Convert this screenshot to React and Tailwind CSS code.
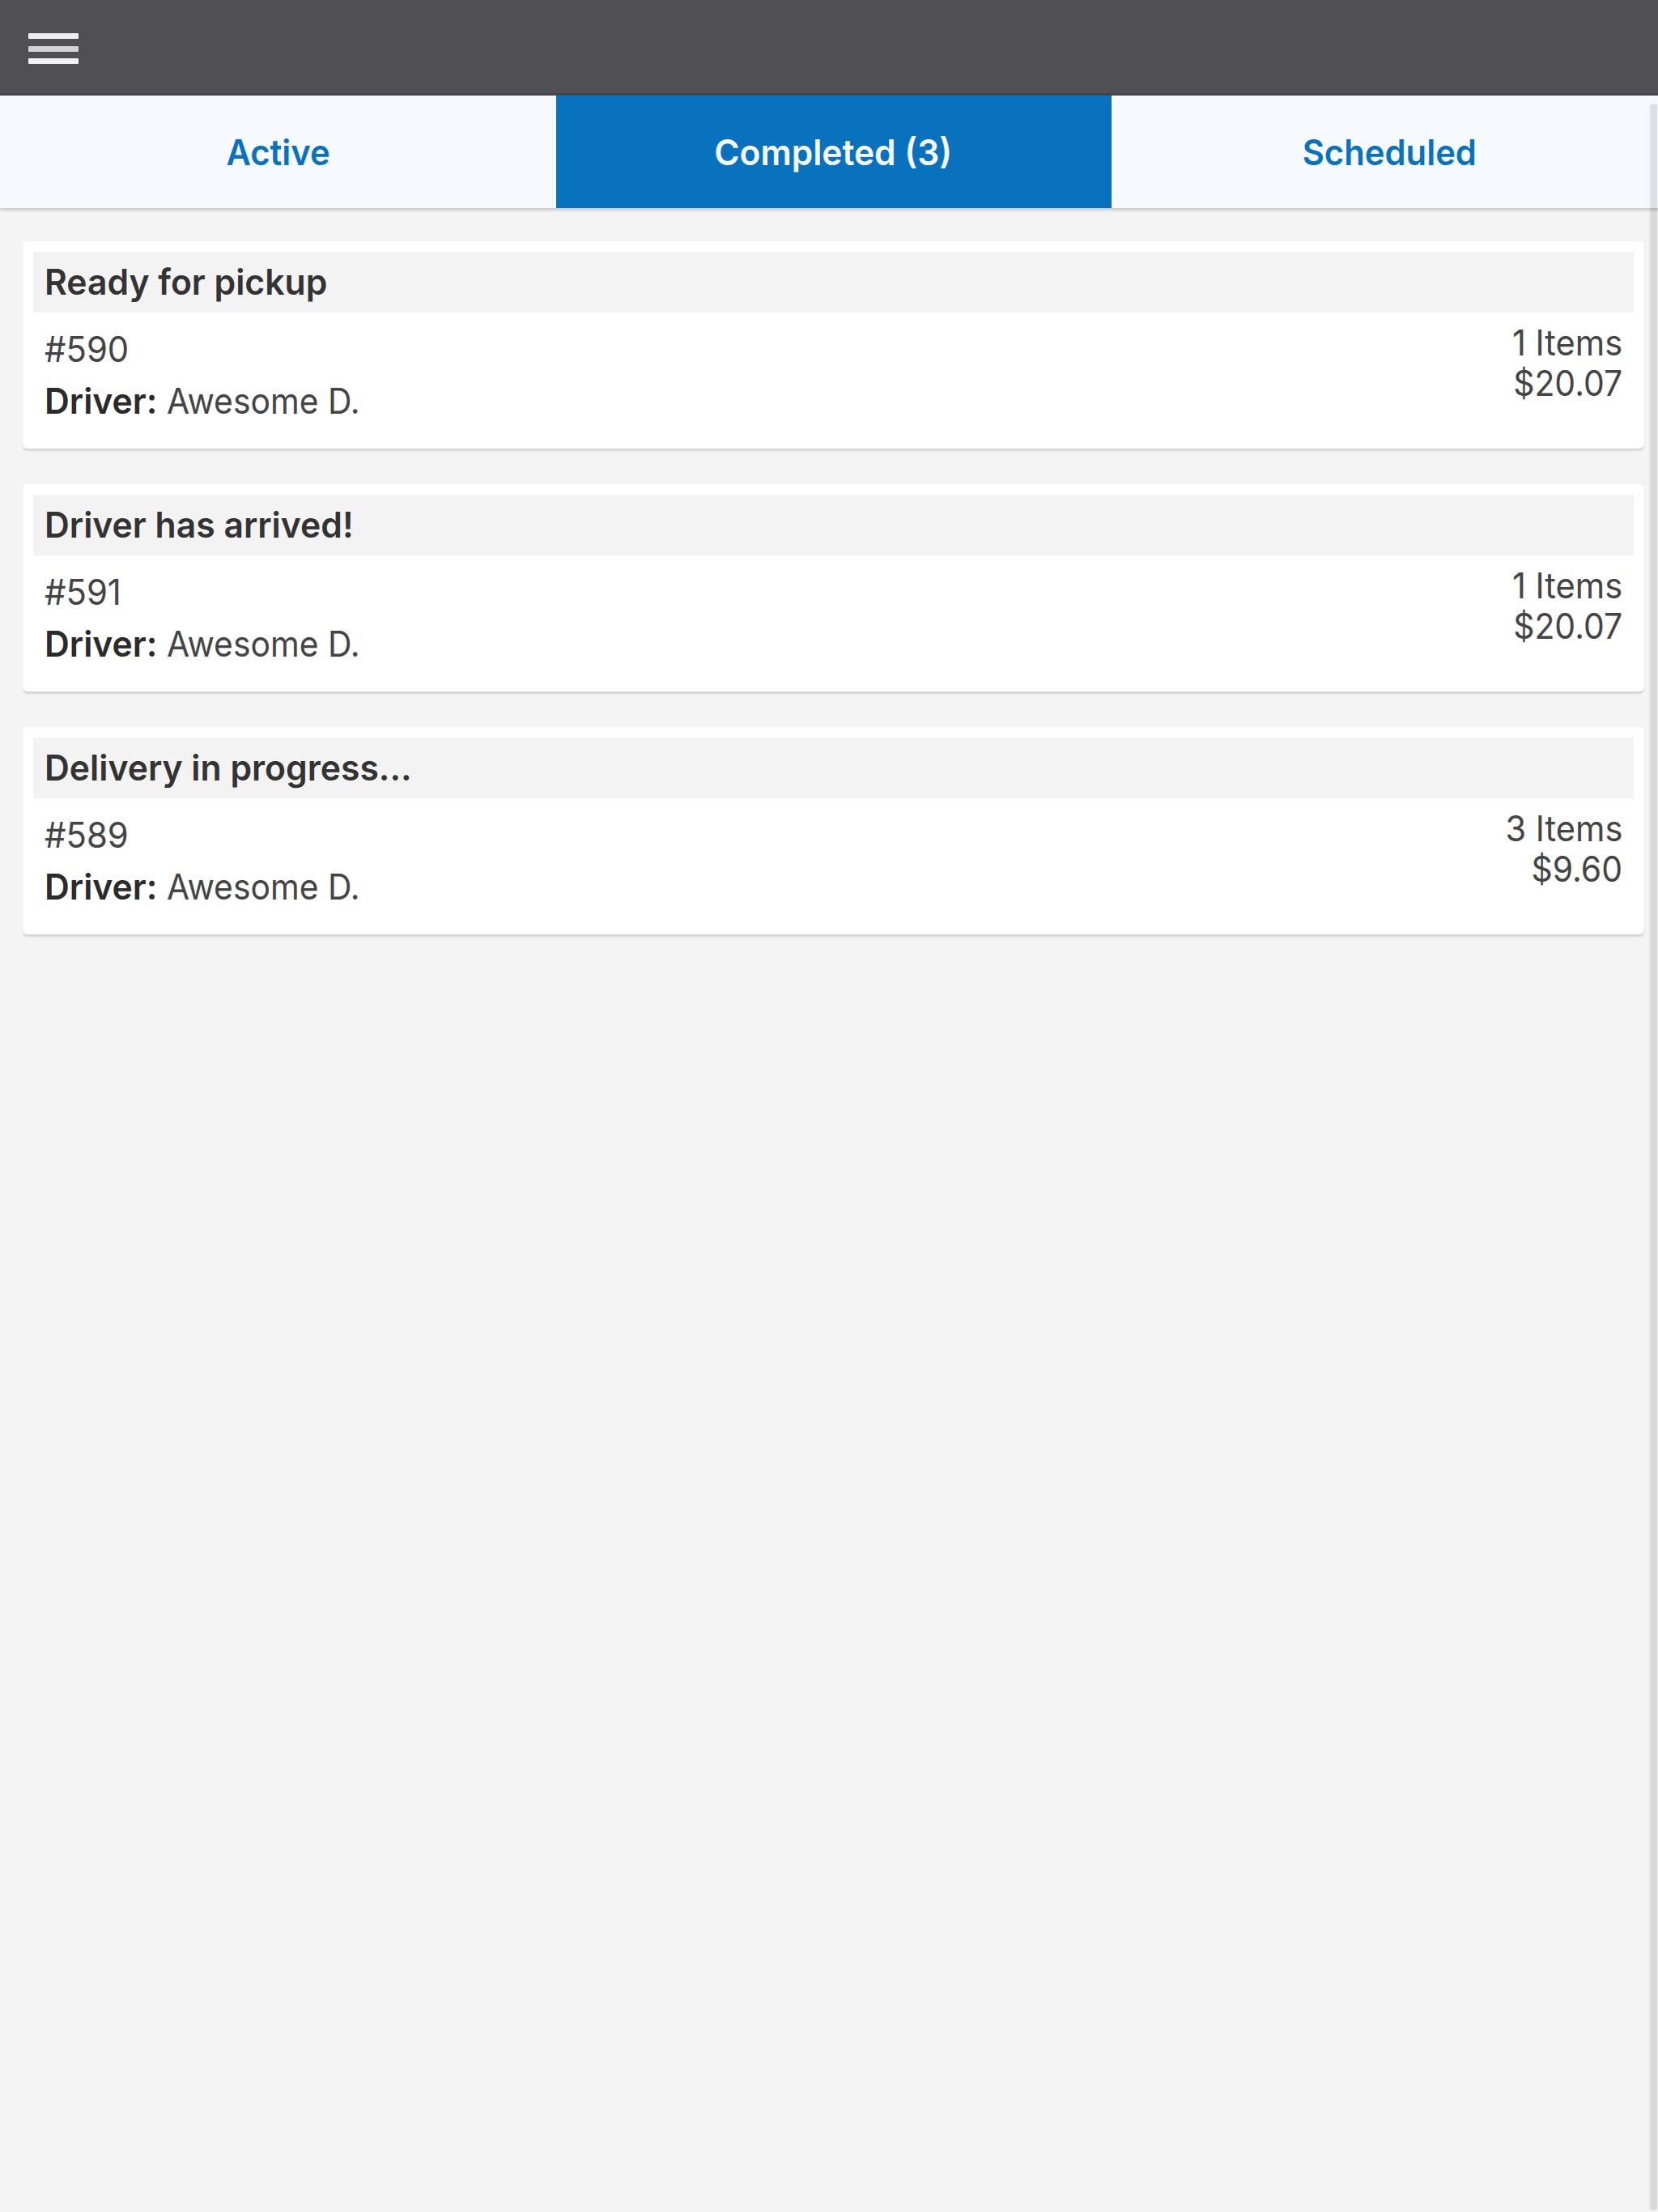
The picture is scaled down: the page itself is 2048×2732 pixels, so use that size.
const tabs = [
  { key: 'active', label: 'Active' },
  { key: 'completed', label: 'Completed (3)' },
  { key: 'scheduled', label: 'Scheduled' },
];

const orders = [
  { id: 590, status: 'Ready for pickup', driver: 'Awesome D.', items: 1, total: '$20.07' },
  { id: 591, status: 'Driver has arrived!', driver: 'Awesome D.', items: 1, total: '$20.07' },
  { id: 589, status: 'Delivery in progress...', driver: 'Awesome D.', items: 3, total: '$9.60' },
];

function Header() {
  return (
    <header className="h-[118px] bg-[#504f54] border-b-3 border-[#454449] pl-[35px] pt-[41px]">
      <button className="flex flex-col justify-between h-[38px] w-[62px]" aria-label="Menu">
        <span className="h-[7px] w-full rounded-[1px] bg-[#eeeeee]" />
        <span className="h-[7px] w-full rounded-[1px] bg-[#d4d4d5]" />
        <span className="h-[7px] w-full rounded-[1px] bg-[#f2f2f2]" />
      </button>
    </header>
  );
}

function Tabs({ current }) {
  return (
    <nav className="grid grid-cols-3 h-[139px] w-[2060px] shadow-[0_3px_3px_rgba(0,0,0,0.16)]">
      {tabs.map((t) => (
        <button key={t.key}
          className={`flex items-center justify-center font-semibold leading-[56px] ${t.key === current ? 'bg-[#0872be] text-[#f6faff] pr-0.5' : 'bg-[#f6faff] text-[#0872be]'}`}>
          <span className={t.key === current ? 'scale-x-[0.965]' : 'scale-x-[0.95]'}>{t.label}</span>
        </button>
      ))}
    </nav>
  );
}

function OrderCard({ order }) {
  return (
    <div className="h-[256px] rounded-md bg-white px-[13px] pt-[13px] shadow-[0_3px_2px_rgba(0,0,0,0.12)]">
      <div className="h-[75px] bg-[#f3f3f3] pl-3.5 leading-[75px] font-semibold text-[#333333]">
        <span className="inline-block origin-left scale-x-[0.97]">{order.status}</span>
      </div>
      <div className="flex justify-between px-3.5">
        <div className="pt-[13px] leading-[64px]">
          <div className="origin-left scale-x-[0.95]">#{order.id}</div>
          <div className="flex">
            <span className="w-[151px]"><b className="inline-block origin-left scale-x-[0.97] font-semibold text-[#2b2b2b]">Driver:</b></span>
            <span className="origin-left scale-x-[0.928]">{order.driver}</span>
          </div>
        </div>
        <div className="flex flex-col items-end pt-3 leading-[50px]">
          <span className="origin-right scale-x-[0.945]">{order.items} Items</span>
          <span className="origin-right scale-x-[0.93]">{order.total}</span>
        </div>
      </div>
    </div>
  );
}

export default function App() {
  return (
    <div className="relative h-[2732px] w-full overflow-hidden bg-[#f4f4f4] font-['Inter',sans-serif] text-[44px] text-[#444444]">
      <Header />
      <Tabs current="completed" />
      <main className="flex flex-col gap-11 pl-7 pr-[17px] pt-[41px]">
        {orders.map((o) => <OrderCard key={o.id} order={o} />)}
      </main>
      {/* scrollbar thumb */}
      <div className="absolute right-px top-[129px] h-[2600px] w-2 bg-black/11 shadow-[-1px_0_3px_rgba(0,0,0,0.1)]" />
    </div>
  );
}
